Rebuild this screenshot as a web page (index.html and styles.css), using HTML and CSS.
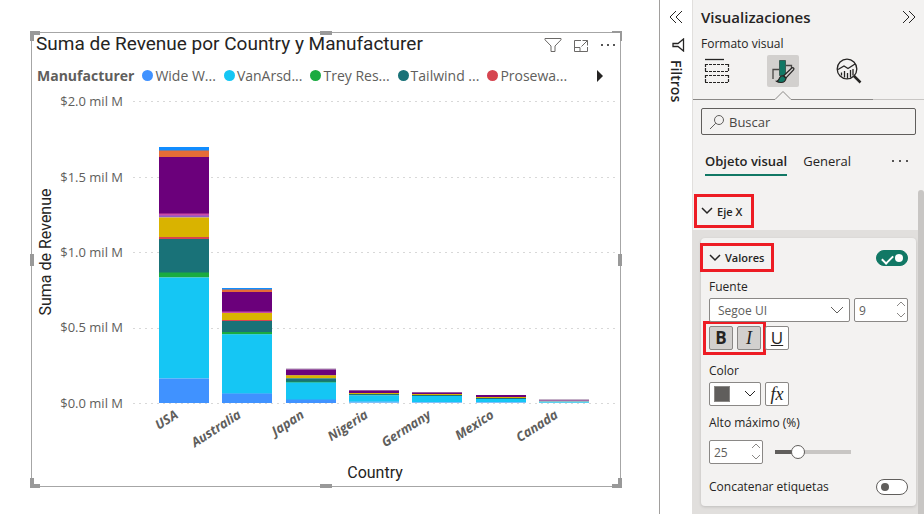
FILE: index.html
```html
<!DOCTYPE html>
<html lang="es">
<head>
    <meta charset="UTF-8">
    <meta name="viewport" content="width=device-width, initial-scale=1.0">
    <title>Suma de Revenue por Country y Manufacturer</title>
    <link rel="stylesheet" href="styles.css">
</head>
<body>
    <main class="lienzo">
        <section class="visual">
            <span class="tirador esquina si"></span>
            <span class="tirador esquina sd"></span>
            <span class="tirador esquina ii"></span>
            <span class="tirador esquina id"></span>
            <span class="tirador arriba"></span>
            <span class="tirador abajo"></span>
            <span class="tirador izquierda"></span>
            <span class="tirador derecha"></span>

            <header class="visual-cabecera">
                <h1>Suma de Revenue por Country y Manufacturer</h1>
                <div class="visual-acciones">
                    <button aria-label="Filtros"><svg width="18" height="16" viewBox="0 0 18 16"><path d="M1 1.500h16v1.300l-6 6.200v5.500H7V9L1 2.800z"/></svg></button>
                    <button aria-label="Modo de enfoque"><svg width="16" height="16" viewBox="0 0 16 16"><path d="M8 3.500H1.500v11h13V10M9.500 3.500h5v5M14.500 3.500L8.500 9.500M1.500 10.500H7v4"/></svg></button>
                    <button aria-label="Más opciones"><svg width="18" height="16" viewBox="0 0 18 16"><g class="puntos"><rect x="1" y="7" width="2" height="2"/><rect x="7" y="7" width="2" height="2"/><rect x="13" y="7" width="2" height="2"/></g></svg></button>
                </div>
            </header>

            <div class="leyenda">
                <strong>Manufacturer</strong>
                <ul>
                    <li><i class="punto azul"></i>Wide W...</li>
                    <li><i class="punto celeste"></i>VanArsd...</li>
                    <li><i class="punto verde"></i>Trey Res...</li>
                    <li><i class="punto petroleo"></i>Tailwind ...</li>
                    <li><i class="punto rojo"></i>Prosewa...</li>
                </ul>
                <button aria-label="Siguiente"><svg width="8" height="14" viewBox="0 0 8 14"><path d="M1 1l6 6-6 6z"/></svg></button>
            </div>

            <svg class="grafico" viewBox="0 0 588 400" role="img" aria-label="Suma de Revenue por Country">
                <g class="rejilla">
                    <path d="M101 15.500H585M101 91.500H585M101 166.500H585M101 242.500H585M101 317.500H585"/>
                </g>
                <g class="eje-y">
                    <text x="91" y="20">$2.0 mil M</text>
                    <text x="91" y="96">$1.5 mil M</text>
                    <text x="91" y="171">$1.0 mil M</text>
                    <text x="91" y="246">$0.5 mil M</text>
                    <text x="91" y="322">$0.0 mil M</text>
                </g>
                <text class="titulo-eje" transform="translate(19 166) rotate(-90)">Suma de Revenue</text>

                <!-- USA -->
                <g transform="translate(127 0)">
                    <rect class="c-intenso" y="61" width="50" height="4"/>
                    <rect class="c-naranja" y="64.500" width="50" height="7"/>
                    <rect class="c-morado" y="71" width="50" height="57"/>
                    <rect class="c-rosa" y="127.500" width="50" height="2.500"/>
                    <rect class="c-violeta" y="129.500" width="50" height="2"/>
                    <rect class="c-amarillo" y="131.500" width="50" height="20"/>
                    <rect class="c-rojo" y="151" width="50" height="2"/>
                    <rect class="c-petroleo" y="153" width="50" height="34"/>
                    <rect class="c-verde" y="186.500" width="50" height="5"/>
                    <rect class="c-celeste" y="191.500" width="50" height="101"/>
                    <rect class="c-azul" y="292.500" width="50" height="24.500"/>
                </g>
                <!-- Australia -->
                <g transform="translate(190 0)">
                    <rect class="c-intenso" y="202" width="50" height="2"/>
                    <rect class="c-naranja" y="203.500" width="50" height="3"/>
                    <rect class="c-morado" y="206" width="50" height="20"/>
                    <rect class="c-rosa" y="225.500" width="50" height="1.500"/>
                    <rect class="c-amarillo" y="227" width="50" height="8"/>
                    <rect class="c-rojo" y="234" width="50" height="1"/>
                    <rect class="c-petroleo" y="235" width="50" height="12"/>
                    <rect class="c-verde" y="246" width="50" height="2.500"/>
                    <rect class="c-celeste" y="248.300" width="50" height="59.500"/>
                    <rect class="c-azul" y="307.500" width="50" height="9.500"/>
                </g>
                <!-- Japan -->
                <g transform="translate(254 0)">
                    <rect class="c-claro" y="282.300" width="50" height="1.500"/>
                    <rect class="c-morado" y="283.500" width="50" height="6"/>
                    <rect class="c-amarillo" y="289.300" width="50" height="3"/>
                    <rect class="c-petroleo" y="292.300" width="50" height="4"/>
                    <rect class="c-verde" y="295.700" width="50" height="1"/>
                    <rect class="c-celeste" y="296.500" width="50" height="17.500"/>
                    <rect class="c-azul" y="313.500" width="50" height="3.500"/>
                </g>
                <!-- Nigeria -->
                <g transform="translate(317 0)">
                    <rect class="c-claro" y="304" width="50" height="1"/>
                    <rect class="c-morado" y="304.500" width="50" height="2.500"/>
                    <rect class="c-amarillo" y="307" width="50" height="1"/>
                    <rect class="c-petroleo" y="308" width="50" height="1.500"/>
                    <rect class="c-celeste" y="309.500" width="50" height="6.500"/>
                    <rect class="c-azul-claro" y="315.500" width="50" height="1.500"/>
                </g>
                <!-- Germany -->
                <g transform="translate(380 0)">
                    <rect class="c-claro" y="306" width="50" height="1"/>
                    <rect class="c-morado" y="306.500" width="50" height="1.800"/>
                    <rect class="c-amarillo" y="308" width="50" height="1"/>
                    <rect class="c-petroleo" y="309" width="50" height="1"/>
                    <rect class="c-celeste" y="310" width="50" height="6"/>
                    <rect class="c-azul-claro" y="316" width="50" height="1"/>
                </g>
                <!-- Mexico -->
                <g transform="translate(444 0)">
                    <rect class="c-morado" y="309" width="50" height="2"/>
                    <rect class="c-amarillo" y="311" width="50" height="1"/>
                    <rect class="c-petroleo" y="312" width="50" height="1"/>
                    <rect class="c-celeste" y="313" width="50" height="3"/>
                    <rect class="c-azul-claro" y="316" width="50" height="1"/>
                </g>
                <!-- Canada -->
                <g transform="translate(507 0)">
                    <rect class="c-claro" y="313" width="50" height="1"/>
                    <rect class="c-malva" y="314" width="50" height="1"/>
                    <rect class="c-petroleo-claro" y="315" width="50" height="1"/>
                    <rect class="c-celeste-claro" y="316" width="50" height="1"/>
                </g>

                <g class="eje-x">
                    <text transform="translate(147 331) rotate(-33)">USA</text>
                    <text transform="translate(210 331) rotate(-33)">Australia</text>
                    <text transform="translate(273 331) rotate(-33)">Japan</text>
                    <text transform="translate(337 331) rotate(-33)">Nigeria</text>
                    <text transform="translate(400 331) rotate(-33)">Germany</text>
                    <text transform="translate(463 331) rotate(-33)">Mexico</text>
                    <text transform="translate(527 331) rotate(-33)">Canada</text>
                </g>
                <text class="titulo-eje" x="343" y="392">Country</text>
            </svg>
        </section>
    </main>

    <aside class="filtros">
        <button aria-label="Expandir filtros"><svg width="14" height="14" viewBox="0 0 14 14"><path d="M7 1L1 7l6 6M13 1L7 7l6 6"/></svg></button>
        <svg width="14" height="14" viewBox="0 0 14 14"><path d="M12.500 1v12L7 8.500H2v-3h5z" stroke-width="1.300"/></svg>
        <span>Filtros</span>
    </aside>

    <aside class="panel">
        <header class="panel-cabecera">
            <h2>Visualizaciones</h2>
            <button aria-label="Contraer"><svg width="14" height="14" viewBox="0 0 14 14"><path d="M1 1l6 6-6 6M7 1l6 6-6 6"/></svg></button>
        </header>
        <p class="subtitulo">Formato visual</p>

        <nav class="modos">
            <button aria-label="Agregar datos">
                <svg width="26" height="26" viewBox="0 0 26 26" fill="none" stroke="#252423">
                    <path d="M1 1.500h19" stroke-width="1.300"/>
                    <path d="M1 6.500h24M1 13.500h24M1 17.500h24M1 24.500h24M1.500 6v8M24.500 6v8M1.500 17v8M24.500 17v8" stroke-dasharray="3 1" stroke-width="1.200"/>
                </svg>
            </button>
            <button class="activo" aria-label="Dar formato a su objeto visual">
                <svg width="24" height="26" viewBox="0 0 24 26" fill="none">
                    <path d="M2 21V11.500h6M14 7.500h6.500V10" stroke="#484644" stroke-width="1.300"/>
                    <path d="M8.500 2.500h6v15h-6z" fill="#117865" stroke="#3b5f56"/>
                    <path d="M22.500 10c.6.500.4 1.200 0 1.800L15 20l-2.300-2.200 7.800-7.500c.7-.6 1.400-.8 2-.3z" fill="#d2d0ce" stroke="#252423" stroke-width="1.200"/>
                    <path d="M12.500 18l2.500 2.300c-.3 2.700-2.500 4.200-5 4.200-1.700 0-3.400-.3-4.500-1.200 2.500-.3 2.200-2 3.300-3.800.8-1.300 2.300-1.800 3.700-1.500z" fill="#117865" stroke="#252423" stroke-width="1.200"/>
                </svg>
            </button>
            <button aria-label="Análisis">
                <svg width="26" height="26" viewBox="0 0 26 26" fill="none" stroke="#252423">
                    <circle cx="11" cy="11" r="9.800" stroke-width="1.300"/>
                    <path d="M2 11.500L8 8l4 2.500L19 6" stroke-width="1.300"/>
                    <path d="M5.500 17.500v-3M8.500 19.500V13M11.500 20.500V15M14.500 19.500V12M17 17.500V11" stroke-width="1.300"/>
                    <path d="M18 18l6.500 6.500" stroke-width="2.500"/>
                </svg>
            </button>
        </nav>
        <div class="separador">
            <svg width="18" height="10" viewBox="0 0 18 10"><path d="M0 9.500h1L9 1.500l8 8h1"/></svg>
        </div>

        <label class="buscar">
            <svg width="16" height="16" viewBox="0 0 16 16"><circle cx="10" cy="6" r="4.500"/><path d="M6.800 9.200L1 15"/></svg>
            <input type="text" placeholder="Buscar">
        </label>

        <div class="pestanas">
            <button class="activa">Objeto visual</button>
            <button>General</button>
            <button class="mas" aria-label="Más"><svg width="16" height="4" viewBox="0 0 16 4"><g class="puntos"><rect x="0" y="1" width="2" height="2"/><rect x="7" y="1" width="2" height="2"/><rect x="14" y="1" width="2" height="2"/></g></svg></button>
        </div>

        <div class="contenido">
            <div class="opciones">
                <div class="grupo">
                    <button class="plegable marcado">
                        <svg width="12" height="8" viewBox="0 0 12 8"><path d="M1 1l5 5 5-5"/></svg>Eje X
                    </button>
                </div>
                <div class="fondo">
                    <section class="tarjeta">
                        <div class="fila titulo-tarjeta">
                            <button class="plegable marcado">
                                <svg width="12" height="8" viewBox="0 0 12 8"><path d="M1 1l5 5 5-5"/></svg>Valores
                            </button>
                            <input type="checkbox" class="interruptor" aria-label="Valores" checked>
                        </div>

                        <label class="etiqueta" for="fuente">Fuente</label>
                        <div class="controles">
                            <div class="campo campo-fuente">
                                <select id="fuente">
                                    <option>Segoe UI</option>
                                </select>
                                <svg width="14" height="8" viewBox="0 0 14 8"><path d="M1 1l6 6 6-6"/></svg>
                            </div>
                            <div class="campo campo-numero">
                                <input type="number" value="9" aria-label="Tamaño de fuente">
                                <svg width="10" height="18" viewBox="0 0 10 18"><path d="M1 5l4-4 4 4M1 12l4 4 4-4"/></svg>
                            </div>
                        </div>
                        <div class="controles">
                            <div class="controles marcado estilos">
                                <button class="boton pulsado negrita">B</button>
                                <button class="boton pulsado cursiva">I</button>
                            </div>
                            <button class="boton subrayado">U</button>
                        </div>

                        <span class="etiqueta">Color</span>
                        <div class="controles">
                            <button class="color" aria-label="Color">
                                <span class="muestra"></span>
                                <svg width="12" height="8" viewBox="0 0 12 8"><path d="M1 1l5 5 5-5"/></svg>
                            </button>
                            <button class="boton funcion">fx</button>
                        </div>

                        <label class="etiqueta etiqueta-alto" for="alto">Alto máximo (%)</label>
                        <div class="controles altura">
                            <div class="campo campo-numero">
                                <input type="number" id="alto" value="25">
                                <svg width="10" height="18" viewBox="0 0 10 18"><path d="M1 5l4-4 4 4M1 12l4 4 4-4"/></svg>
                            </div>
                            <input type="range" class="deslizador" min="0" max="100" value="25" aria-label="Alto máximo">
                        </div>

                        <div class="fila concatenar">
                            <label for="concatenar">Concatenar etiquetas</label>
                            <input type="checkbox" class="interruptor" id="concatenar">
                        </div>
                    </section>
                </div>
            </div>
            <div class="barra"></div>
        </div>
    </aside>
</body>
</html>
```
FILE: styles.css
```css
* {
    box-sizing: border-box;
}
body {
    margin: 0;
    display: flex;
    height: 100vh;
    overflow: hidden;
    background: #fff;
    color: #252423;
    font-family: "Segoe UI", "Open Sans", sans-serif;
    font-size: 12px;
}
button {
    padding: 0;
    border: none;
    background: none;
    color: inherit;
    font: inherit;
    cursor: pointer;
}
svg {
    display: block;
    flex: none;
}
h1, h2, p, ul {
    margin: 0;
    padding: 0;
}

/* Lienzo */
.lienzo {
    flex: 1;
    min-width: 0;
    padding: 32px 38px 0 31px;
}
.visual {
    position: relative;
    border: 1px solid #a6a6a6;
}
.visual-cabecera {
    display: flex;
    justify-content: space-between;
    height: 24px;
    padding: 0 2px 0 4px;
}
h1 {
    font-family: "DIN", Roboto, sans-serif;
    font-size: 19px;
    line-height: 22px;
    font-weight: 400;
    white-space: nowrap;
}
.visual-acciones {
    display: flex;
    align-items: center;
    gap: 11px;
}
.visual-acciones svg {
    fill: none;
    stroke: #6b6967;
}
.puntos {
    fill: #555;
    stroke: none;
}
.leyenda {
    display: flex;
    align-items: center;
    height: 29px;
    padding: 8px 16px 0 5px;
    color: #605e5c;
    font-size: 14px;
    line-height: 16px;
}
.leyenda strong {
    margin-right: 8px;
}
.leyenda ul {
    display: flex;
    flex: 1;
    gap: 8px;
    list-style: none;
}
.leyenda li {
    display: flex;
    align-items: center;
    gap: 2px;
    white-space: nowrap;
}
.leyenda button svg {
    fill: #252423;
}
.punto {
    width: 11px;
    height: 11px;
    border-radius: 50%;
}
.azul { background: #4092ff; }
.celeste { background: #15c6f4; }
.verde { background: #1aab40; }
.petroleo { background: #197278; }
.rojo { background: #d64550; }

/* Gráfico */
.grafico {
    width: 100%;
    height: auto;
}
.rejilla path {
    stroke: #d8d8d8;
    stroke-dasharray: 2 4;
}
.eje-y text {
    fill: #605e5c;
    font-size: 13px;
    text-anchor: end;
}
.eje-x text {
    fill: #605e5c;
    font-size: 13px;
    font-weight: 700;
    font-style: italic;
    text-anchor: end;
}
.titulo-eje {
    font-family: "DIN", Roboto, sans-serif;
    font-size: 16px;
    fill: #252423;
    text-anchor: middle;
}
.c-intenso { fill: #118dff; }
.c-naranja { fill: #e66c37; }
.c-morado { fill: #6b007b; }
.c-rosa { fill: #c94aa8; }
.c-violeta { fill: #8f5cc8; }
.c-amarillo { fill: #d9b300; }
.c-rojo { fill: #d64550; }
.c-petroleo { fill: #197278; }
.c-petroleo-claro { fill: #8fbfc4; }
.c-verde { fill: #1aab40; }
.c-celeste { fill: #15c6f4; }
.c-celeste-claro { fill: #5bd2f2; }
.c-azul { fill: #4092ff; }
.c-azul-claro { fill: #7cc0fb; }
.c-malva { fill: #a56aa8; }
.c-claro { fill: #c4b0c8; }

/* Tiradores de selección */
.tirador {
    position: absolute;
    background: #999;
}
.esquina {
    width: 10px;
    height: 10px;
    background: none;
    border: 0 solid #999;
}
.si { top: -2px; left: -2px; border-width: 4px 0 0 4px; }
.sd { top: -2px; right: -2px; border-width: 2px 2px 0 0; }
.ii { bottom: -2px; left: -2px; border-width: 0 0 4px 4px; }
.id { bottom: -2px; right: -2px; border-width: 0 4px 4px 0; }
.arriba, .abajo {
    left: calc(50% - 6px);
    width: 12px;
    height: 4px;
}
.arriba { top: -2px; }
.abajo { bottom: -2px; }
.izquierda, .derecha {
    top: calc(50% - 6px);
    width: 4px;
    height: 12px;
}
.izquierda { left: -2px; }
.derecha { right: -2px; }

/* Filtros */
.filtros {
    display: flex;
    flex-direction: column;
    align-items: center;
    width: 33px;
    padding-top: 10px;
    border-left: 1px solid #a19f9d;
}
.filtros svg {
    fill: none;
    stroke: #252423;
}
.filtros > svg {
    margin: 14px 0 8px 3px;
}
.filtros span {
    writing-mode: vertical-rl;
    font-size: 14px;
    line-height: 18px;
    font-weight: 600;
}

/* Panel */
.panel {
    display: flex;
    flex-direction: column;
    width: 232px;
    background: #f3f2f1;
    border-left: 1px solid #e1dfdd;
}
.panel-cabecera {
    display: flex;
    justify-content: space-between;
    align-items: center;
    height: 34px;
    padding: 0 8px;
}
.panel-cabecera svg {
    fill: none;
    stroke: #252423;
}
h2 {
    font-size: 15px;
    line-height: 20px;
    font-weight: 600;
}
.subtitulo {
    padding: 2px 8px 3px;
    line-height: 16px;
}
.modos {
    display: flex;
    gap: 34px;
    padding-left: 8px;
}
.modos button {
    display: flex;
    align-items: center;
    justify-content: center;
    width: 32px;
    height: 32px;
}
.modos .activo {
    background: #d2d0ce;
    border-radius: 2px;
}
.separador {
    height: 13px;
    padding: 3px 0 0 81px;
    background: linear-gradient(to right, #8a8886 81px, transparent 81px, transparent 99px, #8a8886 99px, #8a8886 180px, #c8c6c4 180px) 0 12px / 100% 1px no-repeat;
}
.separador svg {
    fill: none;
    stroke: #8a8886;
}
.buscar {
    display: flex;
    align-items: center;
    gap: 4px;
    height: 27px;
    margin: 8px 8px 0;
    padding: 0 7px;
    border: 1px solid #605e5c;
    border-radius: 2px;
}
.buscar svg {
    fill: none;
    stroke: #605e5c;
}
.buscar input {
    flex: 1;
    min-width: 0;
    padding: 0;
    border: none;
    outline: none;
    background: none;
    font: inherit;
    font-size: 13px;
}
.buscar input::placeholder {
    color: #484644;
}
.pestanas {
    display: flex;
    gap: 16px;
    margin: 17px 16px 14px 12px;
    font-size: 13px;
    line-height: 18px;
}
.pestanas button {
    height: 24px;
    padding-bottom: 6px;
}
.pestanas .activa {
    border-bottom: 2px solid #117865;
    font-weight: 600;
}
.pestanas .mas {
    margin-left: auto;
}
.contenido {
    display: flex;
    flex: 1;
    min-height: 0;
}
.opciones {
    display: flex;
    flex-direction: column;
    flex: 1;
}
.barra {
    width: 6px;
    background: #c8c6c4;
    border-radius: 3px 3px 0 0;
}
.grupo {
    padding: 4px 1px 2px;
}
.plegable {
    display: flex;
    align-items: center;
    gap: 4px;
    height: 34px;
    padding: 0 9px 0 4px;
    font-size: 11px;
    font-weight: 600;
}
.plegable svg, .campo svg, .color svg {
    fill: none;
    stroke: #252423;
}
.plegable svg {
    stroke-width: 1.5;
}
.marcado {
    border: 3px solid #ed1c24;
}
.fondo {
    flex: 1;
    padding: 8px 2px 8px 8px;
    background: #e1dfdd;
}
.tarjeta {
    padding: 5px 8px 11px;
    border-radius: 4px;
    background: #f3f2f1;
    box-shadow: 0 1px 3px rgba(0, 0, 0, 0.15);
}
.fila {
    display: flex;
    justify-content: space-between;
    align-items: center;
}
.titulo-tarjeta .plegable {
    height: 29px;
    margin-left: -9px;
    padding: 0 7px 0 6px;
}
.etiqueta {
    display: block;
    padding: 7px 0 3px;
    line-height: 16px;
}
.etiqueta-alto {
    padding: 9px 0 9px;
}
.controles {
    display: flex;
    gap: 4px;
}
.campo {
    position: relative;
    height: 24px;
}
.campo-fuente {
    flex: 1;
}
.campo-numero {
    width: 54px;
}
.campo select, .campo input {
    width: 100%;
    height: 100%;
    margin: 0;
    padding: 0 4px;
    border: 1px solid #8a8886;
    border-radius: 2px;
    background: #fff;
    color: #605e5c;
    font: inherit;
    appearance: none;
}
.campo select {
    padding-left: 8px;
}
.campo input {
    appearance: textfield;
}
.campo input::-webkit-inner-spin-button {
    display: none;
}
.campo svg {
    position: absolute;
    top: 3px;
    right: 2px;
    stroke: #8a8886;
    pointer-events: none;
}
.campo-fuente svg {
    top: 8px;
    right: 6px;
    stroke: #605e5c;
}
.estilos {
    margin: -1px -5px 1px -6px;
    padding: 2px 2px 2px 3px;
}
.boton {
    width: 24px;
    height: 24px;
    border: 1px solid #8a8886;
    border-radius: 2px;
    background: #fff;
    font-size: 17px;
    line-height: 20px;
}
.pulsado {
    background: #d2d0ce;
}
.negrita {
    font-weight: 700;
}
.cursiva, .funcion {
    font-family: "Liberation Serif", serif;
    font-style: italic;
    font-size: 18px;
}
.subrayado {
    margin-top: 4px;
    text-decoration: underline;
}
.color {
    display: flex;
    align-items: center;
    justify-content: space-between;
    width: 52px;
    height: 24px;
    padding: 0 4px;
    border: 1px solid #8a8886;
    border-radius: 2px;
    background: #fff;
}
.muestra {
    width: 16px;
    height: 16px;
    background: #605e5c;
    border: 1px solid #8a8886;
}
.altura {
    gap: 12px;
    align-items: center;
}
.deslizador {
    width: 76px;
    height: 14px;
    margin: 0;
    appearance: none;
    background: linear-gradient(to right, #605e5c 20px, #c8c6c4 20px) 0 50% / 100% 4px no-repeat;
}
.deslizador::-webkit-slider-thumb {
    appearance: none;
    width: 14px;
    height: 14px;
    border: 1px solid #605e5c;
    border-radius: 50%;
    background: #fff;
}
.concatenar {
    margin-top: 15px;
    line-height: 16px;
}
.interruptor {
    position: relative;
    width: 32px;
    height: 16px;
    margin: 0;
    border: 1px solid #605e5c;
    border-radius: 8px;
    background: #fff;
    appearance: none;
}
.interruptor::before {
    content: "";
    position: absolute;
    top: 3px;
    left: 4px;
    width: 8px;
    height: 8px;
    border-radius: 50%;
    background: #605e5c;
}
.interruptor:checked {
    border-color: #117865;
    background: #117865;
}
.interruptor:checked::before {
    left: 18px;
    background: #fff;
}
.interruptor:checked::after {
    content: "";
    position: absolute;
    top: 2px;
    left: 7px;
    width: 5px;
    height: 9px;
    border: solid #fff;
    border-width: 0 2px 2px 0;
    transform: rotate(45deg);
}
```
